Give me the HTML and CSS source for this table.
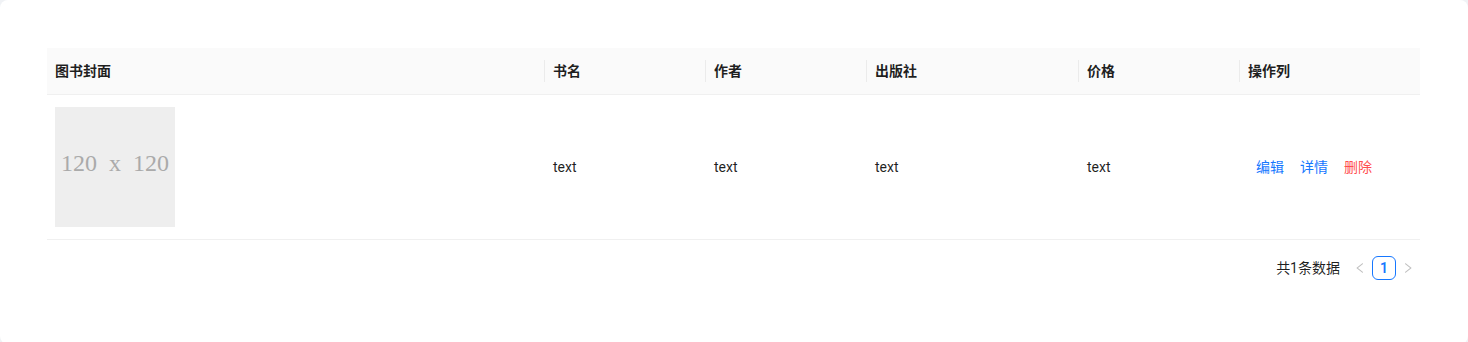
FILE: index.html
```html
<!DOCTYPE html>
<html lang="zh-CN">
<head>
<meta charset="utf-8">
<title>图书列表</title>
<link rel="stylesheet" href="styles.css">
</head>
<body>
<div class="card">
  <table class="book-table">
    <colgroup>
      <col class="c-cover"><col class="c-name"><col class="c-author"><col class="c-press"><col class="c-price"><col class="c-op">
    </colgroup>
    <thead>
      <tr>
        <th>图书封面</th>
        <th>书名</th>
        <th>作者</th>
        <th>出版社</th>
        <th>价格</th>
        <th>操作列</th>
      </tr>
    </thead>
    <tbody>
      <tr>
        <td><div class="cover"><span class="cover-text">120  x  120</span></div></td>
        <td>text</td>
        <td>text</td>
        <td>text</td>
        <td>text</td>
        <td class="ops"><a class="op op-blue">编辑</a><a class="op op-blue">详情</a><a class="op op-red">删除</a></td>
      </tr>
    </tbody>
  </table>
  <div class="pagination">
    <span class="total">共1条数据</span>
    <span class="pg-btn disabled">
      <svg viewBox="64 64 896 896" width="12" height="12"><path fill="currentColor" d="M724 218.3V141c0-6.7-7.7-10.4-12.9-6.3L260.3 486.8a31.86 31.86 0 000 50.3l450.8 352.1c5.3 4.1 12.9.4 12.9-6.3v-77.3c0-4.9-2.3-9.6-6.1-12.6l-360-281 360-281.1c3.8-3 6.1-7.7 6.1-12.6z"/></svg>
    </span>
    <span class="pg-item active">1</span>
    <span class="pg-btn disabled">
      <svg viewBox="64 64 896 896" width="12" height="12"><path fill="currentColor" d="M765.7 486.8L314.9 134.7A7.97 7.97 0 00302 141v77.3c0 4.9 2.3 9.6 6.1 12.6l360 281.1-360 281.1c-3.9 3-6.1 7.7-6.1 12.6V883c0 6.7 7.7 10.4 12.9 6.3l450.8-352.1a31.96 31.96 0 000-50.4z"/></svg>
    </span>
  </div>
  <div class="watermark" id="watermark" aria-hidden="true"></div>
</div>
<script src="script.js"></script>
</body>
</html>
```

FILE: styles.css
```css
html, body {
  margin: 0;
  padding: 0;
}
body {
  background: #f0f2f5;
  font-family: Roboto, "Noto Sans CJK SC", sans-serif;
  font-size: 14px;
  line-height: 22px;
  color: rgba(0, 0, 0, 0.88);
  overflow: hidden;
}
.card {
  position: relative;
  background: #fff;
  border-radius: 8px;
  padding: 48px 48px 64px 47px;
  overflow: hidden;
}
.book-table {
  width: 1373px;
  border-collapse: separate;
  border-spacing: 0;
  table-layout: fixed;
}
.c-cover { width: 498px; }
.c-name { width: 161px; }
.c-author { width: 161px; }
.c-press { width: 212px; }
.c-price { width: 161px; }
.c-op { width: 180px; }

.book-table th {
  position: relative;
  background: #fafafa;
  font-weight: 600;
  text-align: left;
  padding: 12px 8px;
  border-bottom: 1px solid #f0f0f0;
  color: rgba(0, 0, 0, 0.88);
}
.book-table th:not(:last-child)::before {
  content: "";
  position: absolute;
  right: 0;
  top: 50%;
  width: 1px;
  height: 22px;
  transform: translateY(-50%);
  background: rgba(0, 0, 0, 0.06);
}
.book-table td {
  padding: 12px 8px;
  border-bottom: 1px solid #f0f0f0;
  vertical-align: middle;
}
.cover {
  width: 120px;
  height: 120px;
  background: #eeeeee;
  display: flex;
  align-items: center;
  justify-content: center;
}
.cover-text {
  font-family: "Liberation Serif", serif;
  font-size: 24px;
  line-height: 28px;
  color: #aaaaaa;
  white-space: pre;
  margin-bottom: 8px;
}
.ops {
  white-space: nowrap;
}
.op {
  display: inline-block;
  padding: 0 8px;
  cursor: pointer;
}
.op-blue { color: #1677ff; }
.op-red { color: #ff4d4f; }

.pagination {
  display: flex;
  justify-content: flex-end;
  align-items: center;
  margin-top: 16px;
  width: 1373px;
}
.total {
  margin-right: 8px;
  line-height: 24px;
}
.pg-btn {
  width: 24px;
  height: 24px;
  display: flex;
  align-items: center;
  justify-content: center;
}
.pg-btn.disabled { color: rgba(0, 0, 0, 0.25); }
.pg-item {
  box-sizing: border-box;
  width: 24px;
  height: 24px;
  line-height: 22px;
  text-align: center;
  border-radius: 6px;
  font-size: 14px;
}
.pg-item.active {
  border: 1px solid #1677ff;
  color: #1677ff;
  font-weight: 600;
}
.watermark {
  position: absolute;
  inset: 0;
  pointer-events: none;
  overflow: hidden;
}
.wm {
  position: absolute;
  font-family: "Liberation Sans", sans-serif;
  font-size: 32px;
  letter-spacing: 5px;
  color: rgba(0, 0, 0, 0.014);
  white-space: nowrap;
  transform: translate(-50%, -50%) rotate(-22deg);
}
```

FILE: script.js
```js
(function () {
  var host = document.getElementById('watermark');
  for (var i = -2; i <= 5; i++) {
    for (var j = -2; j <= 3; j++) {
      var x = 313 + 345 * i + 50 * j;
      var y = 130 + 28 * i + 138 * j;
      if (x < -200 || x > 1700 || y < -100 || y > 460) continue;
      var s = document.createElement('span');
      s.className = 'wm';
      s.textContent = '8261liqing';
      s.style.left = x + 'px';
      s.style.top = y + 'px';
      host.appendChild(s);
    }
  }
})();
```
